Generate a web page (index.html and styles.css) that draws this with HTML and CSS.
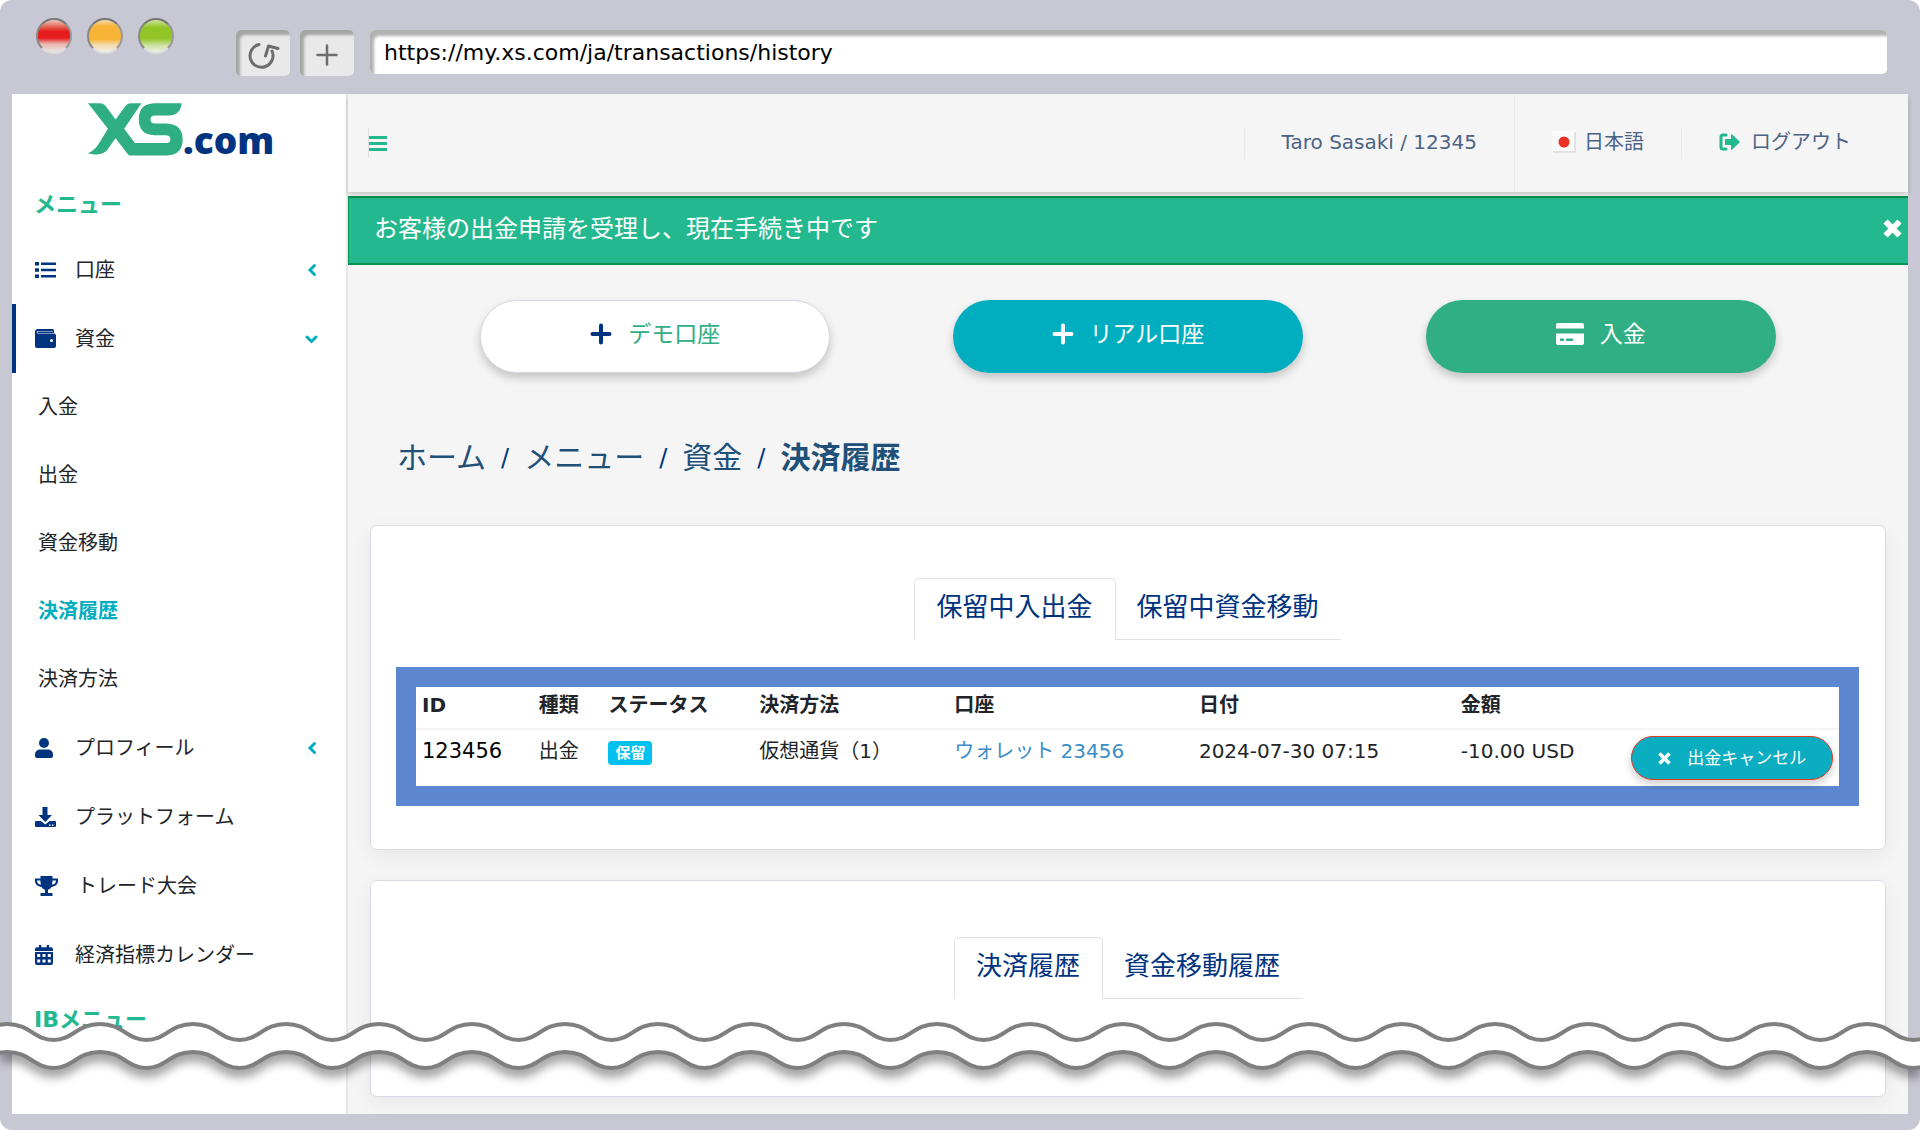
FILE: index.html
```html
<!DOCTYPE html>
<html lang="ja">
<head>
<meta charset="utf-8">
<title>決済履歴 | XS.com</title>
<link rel="stylesheet" href="styles.css">
</head>
<body>
<div class="window">
  <div class="chrome">
    <div class="lights">
      <span class="light light-red"></span>
      <span class="light light-yellow"></span>
      <span class="light light-green"></span>
    </div>
    <div class="chrome-buttons">
      <button class="chrome-button" type="button" aria-label="再読み込み">
        <svg width="34" height="30" viewBox="0 0 34 30" fill="none" stroke="#6e6e6e" stroke-width="3" stroke-linecap="round" stroke-linejoin="round"><path d="M13 4.500A11.500 11.500 0 1 0 26 11M19.500 16L22.500 6L32 8.500"/></svg>
      </button>
      <button class="chrome-button" type="button" aria-label="新しいタブ">
        <svg width="22" height="22" viewBox="0 0 22 22" fill="none" stroke="#6e6e6e" stroke-width="2.500" stroke-linecap="round"><path d="M11 1.500V20.500M1.500 11H20.500"/></svg>
      </button>
    </div>
    <input class="address" type="text" aria-label="アドレス" value="https://my.xs.com/ja/transactions/history">
  </div>

  <div class="page">
    <aside class="sidebar">
      <a class="logo" href="#" aria-label="XS.com">
        <svg width="95" height="53" viewBox="264 308 286 158" fill="#2fae84"><path d="M264 308H301Q312 308 320 320L347 357L377 316Q383 308 391 308H425L373 385L405 428H498Q512 428 512 416Q512 404 498 404H463Q417 402 417 356Q417 310 463 308H546Q543 343 508 345H466Q452 345 452 357Q452 369 466 369H500Q549 371 549 417Q549 463 502 465H387L347 413L324 446Q309 470 264 459Q286 448 297 429L324 385Z"/></svg>
        <span class="logo-com">.com</span>
      </a>
      <h2 class="menu-title">メニュー</h2>
      <nav class="menu">
        <a class="menu-item" href="#">
          <svg class="menu-icon" width="21" height="18" viewBox="0 0 21 18" fill="#003380"><path d="M0 1h4v3.500H0zM0 7.200h4v3.500H0zM0 13.500h4V17H0zM6 1.500h15V4H6zM6 7.800h15v2.500H6zM6 14h15v2.500H6z"/></svg>
          <span class="menu-label">口座</span>
          <svg class="chevron" width="14" height="14" viewBox="0 0 14 14"><path d="M9.500 2.500L5 7l4.500 4.500"/></svg>
        </a>
        <a class="menu-item menu-item-active" href="#">
          <svg class="menu-icon" width="21" height="19" viewBox="0 0 21 19"><path fill="#003380" d="M3 0h14.500A1.500 1.500 0 0 1 19 1.500V4H3.200a.7.700 0 0 1 0-1.400H18V2H3A1.200 1.200 0 0 0 3 4.500H19a2 2 0 0 1 2 2V17a2 2 0 0 1-2 2H2a2 2 0 0 1-2-2V3a3 3 0 0 1 3-3z"/><circle cx="16.500" cy="11.500" r="1.500" fill="#fff"/></svg>
          <span class="menu-label">資金</span>
          <svg class="chevron" width="14" height="14" viewBox="0 0 14 14"><path d="M2 5L6.500 9.500L11 5"/></svg>
        </a>
        <a class="menu-sub" href="#">入金</a>
        <a class="menu-sub" href="#">出金</a>
        <a class="menu-sub" href="#">資金移動</a>
        <a class="menu-sub menu-sub-current" href="#">決済履歴</a>
        <a class="menu-sub" href="#">決済方法</a>
        <a class="menu-item" href="#">
          <svg class="menu-icon" width="18" height="20" viewBox="0 0 18 20" fill="#003380"><circle cx="9" cy="5" r="5"/><path d="M5 11.500h8a5 5 0 0 1 5 5V18a2 2 0 0 1-2 2H2a2 2 0 0 1-2-2v-1.500a5 5 0 0 1 5-5z"/></svg>
          <span class="menu-label">プロフィール</span>
          <svg class="chevron" width="14" height="14" viewBox="0 0 14 14"><path d="M9.500 2.500L5 7l4.500 4.500"/></svg>
        </a>
        <a class="menu-item" href="#">
          <svg class="menu-icon" width="21" height="20" viewBox="0 0 21 20" fill="#003380"><path d="M7.500 0h5v8H17l-6.700 7L3.500 8h4z"/><path fill-rule="evenodd" d="M1 14h5l4.300 3.500L14.500 14H20a1 1 0 0 1 1 1v4a1 1 0 0 1-1 1H1a1 1 0 0 1-1-1v-4a1 1 0 0 1 1-1zm13 3.500V19h1.500v-1.500zm3 0V19h1.500v-1.500z"/></svg>
          <span class="menu-label">プラットフォーム</span>
        </a>
        <a class="menu-item" href="#">
          <svg class="menu-icon" width="23" height="20" viewBox="0 0 23 20" fill="#003380"><path fill-rule="evenodd" d="M5.500 0h12v2.500H23V5c0 3.500-3 5.500-6.500 6-.8 1.500-2 2.300-3.500 2.700V17h4.500v3h-12v-3H10v-3.300C8.500 13.300 7.300 12.500 6.500 11 3 10.500 0 8.500 0 5V2.500h5.500zM2 4.500V5c0 2 1.700 3.300 4 3.800-.4-1.300-.6-2.800-.6-4.300zm15.500 0c0 1.500-.2 3-.6 4.300C19.300 8.300 21 7 21 5v-.5z"/></svg>
          <span class="menu-label">トレード大会</span>
        </a>
        <a class="menu-item" href="#">
          <svg class="menu-icon" width="18" height="20" viewBox="0 0 18 20" fill="#003380"><path fill-rule="evenodd" d="M4 0h2.300v2.200h5.400V0H14v2.200h2A2 2 0 0 1 18 4v2H0V4a2 2 0 0 1 2-1.800h2zM0 7h18v11a2 2 0 0 1-2 2H2a2 2 0 0 1-2-2zm2.200 2v3h3V9zm5.300 0v3h3V9zm5.300 0v3h3V9zM2.200 14.500v3h3v-3zm5.300 0v3h3v-3zm5.300 0v3h3v-3z"/></svg>
          <span class="menu-label">経済指標カレンダー</span>
        </a>
      </nav>
      <h2 class="menu-title">IBメニュー</h2>
    </aside>

    <main class="main">
      <header class="topbar">
        <button class="toggle" type="button" aria-label="メニュー切替">
          <svg width="18" height="17" viewBox="0 0 18 17" fill="#22b890"><path d="M0 1h18v3H0zM0 7h18v3H0zM0 13h18v3H0z"/></svg>
        </button>
        <div class="topbar-links">
          <a class="topbar-link topbar-user" href="#">Taro Sasaki / 12345</a>
          <a class="topbar-link topbar-lang" href="#">
            <svg width="24" height="22" viewBox="0 0 24 22"><path fill="#e2e2e2" d="M1 1h23v21H1z"/><path fill="#fafafa" d="M0 0h22v20H0z"/><circle cx="12" cy="11" r="5.500" fill="#ee3124"/></svg>
            日本語
          </a>
          <a class="topbar-link topbar-logout" href="#">
            <svg width="21" height="18" viewBox="0 0 21 18"><path fill="none" stroke="#22b890" stroke-width="3" stroke-linecap="round" d="M7 2H4Q2 2 2 4v10q0 2 2 2h3"/><path fill="#22b890" d="M6 6h6V2.500q0-2 1.500-.7l6.800 6.400q.8.800 0 1.600l-6.800 6.400q-1.500 1.300-1.500-.7V12H6z"/></svg>
            ログアウト
          </a>
        </div>
      </header>

      <div class="alert" role="alert">
        <span>お客様の出金申請を受理し、現在手続き中です</span>
        <button class="alert-close" type="button" aria-label="閉じる">
          <svg width="19" height="19" viewBox="0 0 19 19" fill="none" stroke="#fff" stroke-width="6"><path d="M2.500 2.500L16.500 16.500M16.500 2.500L2.500 16.500"/></svg>
        </button>
      </div>

      <div class="actions">
        <button class="action action-demo" type="button">
          <svg width="22" height="22" viewBox="0 0 22 22" fill="none" stroke="#003380" stroke-width="4" stroke-linecap="round"><path d="M11 2.500v17M2.500 11h17"/></svg>
          デモ口座
        </button>
        <button class="action action-real" type="button">
          <svg width="22" height="22" viewBox="0 0 22 22" fill="none" stroke="#fff" stroke-width="4" stroke-linecap="round"><path d="M11 2.500v17M2.500 11h17"/></svg>
          リアル口座
        </button>
        <button class="action action-deposit" type="button">
          <svg width="28" height="22" viewBox="0 0 28 22" fill="#fff"><path fill-rule="evenodd" d="M2 0h24a2 2 0 0 1 2 2v3.500H0V2a2 2 0 0 1 2-2zM0 10.500h28V20a2 2 0 0 1-2 2H2a2 2 0 0 1-2-2zM4 15.500V18h4v-2.500zm6 0V18h7v-2.500z"/></svg>
          入金
        </button>
      </div>

      <nav class="breadcrumb" aria-label="パンくず">
        <a href="#">ホーム</a><span>/</span><a href="#">メニュー</a><span>/</span><a href="#">資金</a><span>/</span><a class="breadcrumb-current" href="#">決済履歴</a>
      </nav>

      <div class="cards">
        <section class="card">
          <div class="tabs" role="tablist">
            <button class="tab tab-active" type="button" role="tab">保留中入出金</button>
            <button class="tab" type="button" role="tab">保留中資金移動</button>
          </div>
          <div class="highlight">
            <table class="transactions">
              <colgroup><col class="col-id"><col class="col-type"><col class="col-status"><col class="col-method"><col class="col-account"><col class="col-date"><col class="col-amount"><col></colgroup>
              <thead>
                <tr><th>ID</th><th>種類</th><th>ステータス</th><th>決済方法</th><th>口座</th><th>日付</th><th>金額</th><th></th></tr>
              </thead>
              <tbody>
                <tr>
                  <td class="cell-id">123456</td>
                  <td>出金</td>
                  <td><span class="badge">保留</span></td>
                  <td>仮想通貨（1）</td>
                  <td><a class="account-link" href="#">ウォレット 23456</a></td>
                  <td>2024-07-30 07:15</td>
                  <td>-10.00 USD</td>
                  <td class="cell-action">
                    <button class="cancel" type="button">
                      <svg width="13" height="13" viewBox="0 0 13 13" fill="none" stroke="#fff" stroke-width="3.500"><path d="M1.500 1.500l10 10M11.500 1.500l-10 10"/></svg>
                      出金キャンセル
                    </button>
                  </td>
                </tr>
              </tbody>
            </table>
          </div>
        </section>

        <section class="card card-history">
          <div class="tabs" role="tablist">
            <button class="tab tab-active" type="button" role="tab">決済履歴</button>
            <button class="tab" type="button" role="tab">資金移動履歴</button>
          </div>
        </section>
      </div>
    </main>
  </div>

  <svg class="tear" width="100%" height="48" aria-hidden="true">
    <defs>
      <pattern id="wave" x="7" y="0" width="93" height="48" patternUnits="userSpaceOnUse">
        <path fill="#fff" d="M0 2C23 2 27 18 46.500 18S70 2 93 2V30C70 30 66 46 46.500 46S23 30 0 30Z"/>
        <path fill="none" stroke="#7f7f7f" stroke-width="4" d="M-2 2H0C23 2 27 18 46.500 18S70 2 93 2H95M-2 30H0C23 30 27 46 46.500 46S70 30 93 30H95"/>
      </pattern>
    </defs>
    <rect width="100%" height="48" fill="url(#wave)"/>
  </svg>
</div>
</body>
</html>
```
FILE: styles.css
```css
* {
  box-sizing: border-box;
}

body {
  margin: 0;
  background: #fff;
  font-family: "DejaVu Sans", "Noto Sans CJK JP", sans-serif;
  font-size: 20px;
  line-height: 30px;
  color: #212529;
}

a {
  color: inherit;
  text-decoration: none;
}

button {
  margin: 0;
  padding: 0;
  border: 0;
  background: none;
  font: inherit;
  color: inherit;
}

svg {
  flex: none;
}

/* Browser frame */
.window {
  position: relative;
  display: flex;
  flex-direction: column;
  min-height: 100vh;
  padding: 0 12px 16px;
  border-radius: 12px;
  background: #c8c7d4;
  overflow: hidden;
}

.chrome {
  display: flex;
  align-items: flex-start;
  height: 94px;
  padding: 18px 21px 0 24px;
}

.lights {
  display: flex;
  gap: 15px;
  width: 200px;
}

.light {
  width: 36px;
  height: 36px;
  border: 2px solid;
  border-color: #777 #999 #ddd #888;
  border-radius: 50%;
}

.light-red {
  background: linear-gradient(#f0c8c0, #e0604c 22%, #e61c1c 36%, #e61c1c 56%, #eab8ae 75%, #ece4e0);
}

.light-yellow {
  background: linear-gradient(#f6dcae, #f8b436 20%, #f8b436 60%, #f4dcae 78%, #f2ede2);
}

.light-green {
  background: linear-gradient(#cde49c, #92c626 24%, #92c626 58%, #cbe09c 78%, #eef0e6);
}

.chrome-buttons {
  display: flex;
  gap: 10px;
  padding: 12px 16px 0 0;
}

.chrome-button {
  display: flex;
  align-items: center;
  justify-content: center;
  width: 54px;
  height: 46px;
  padding-top: 4px;
  border-radius: 5px;
  background: #e9e9e9;
  box-shadow: inset 4px 5px 3px #a4a4a4;
}

.address {
  flex: 1;
  min-width: 0;
  height: 44px;
  margin-top: 12px;
  padding: 0 14px;
  border: 0;
  border-radius: 5px;
  background: #fff;
  box-shadow: inset 4px 6px 3px #b2b2b2;
  font: inherit;
  font-size: 22px;
  color: #000;
}

.page {
  display: flex;
  flex: 1;
  background: #f5f5f5;
}

/* Sidebar */
.sidebar {
  flex: none;
  width: 336px;
  border-right: 2px solid #e8e8e8;
  background: #fff;
}

.logo {
  display: flex;
  align-items: flex-end;
  height: 62px;
  margin-bottom: 32px;
  padding-left: 76px;
}

.logo-com {
  font-family: "Open Sans", sans-serif;
  font-size: 37px;
  font-weight: 800;
  line-height: 32px;
  color: #003380;
}

.menu-title {
  margin: 0;
  padding-left: 22px;
  font-size: 22px;
  font-weight: 700;
  line-height: 34px;
  color: #22b890;
}

.menu {
  padding: 13px 0 14px;
}

.menu-item {
  display: flex;
  align-items: center;
  height: 69px;
  padding: 0 27px 0 23px;
}

.menu-item-active {
  padding-left: 19px;
  border-left: 4px solid #003380;
}

.menu-icon {
  margin-right: 19px;
}

.menu-icon[width="18"] {
  margin-right: 22px;
}

.menu-label {
  flex: 1;
}

.chevron {
  fill: none;
  stroke: #00aec0;
  stroke-width: 3;
  stroke-linecap: round;
}

.menu-sub {
  display: block;
  padding-left: 26px;
  line-height: 68px;
}

.menu-sub-current {
  font-weight: 700;
  color: #00aec0;
}

/* Main column */
.main {
  flex: 1;
  min-width: 0;
}

.topbar {
  display: flex;
  align-items: center;
  justify-content: space-between;
  position: relative;
  height: 98px;
  margin-bottom: 4px;
  padding-left: 20px;
  box-shadow: 0 3px 5px rgba(0, 0, 0, 0.18);
  color: #4c6385;
}

.toggle {
  display: flex;
  align-items: center;
  height: 30px;
  border-left: 1px solid #e0e0e0;
}

.topbar-links {
  display: flex;
  align-items: center;
  align-self: stretch;
}

.topbar-link {
  display: flex;
  align-items: center;
  gap: 8px;
  padding: 0 37px 2px;
  border-left: 1px solid #eaeaea;
}

.topbar-lang {
  align-self: stretch;
}

.topbar-logout {
  gap: 11px;
  padding-right: 57px;
}

.alert {
  display: flex;
  align-items: center;
  justify-content: space-between;
  height: 69px;
  padding: 0 6px 4px 25px;
  border: 1px solid #0a9150;
  border-width: 2px 0 2px 1px;
  background: #24b88f;
  font-size: 24px;
  color: #fff;
}

.alert-close {
  display: flex;
}

.actions {
  display: grid;
  grid-template-columns: repeat(3, 1fr);
  justify-items: center;
  padding: 35px 71px 0;
}

.action {
  display: flex;
  align-items: center;
  justify-content: center;
  gap: 16px;
  width: 74%;
  height: 73px;
  padding-bottom: 6px;
  border-radius: 37px;
  box-shadow: 0 5px 10px rgba(0, 0, 0, 0.2);
  font-size: 23px;
  color: #fff;
}

.action-demo {
  border: 1px solid #d5d8e2;
  background: #fff;
  color: #2fae84;
}

.action-real {
  background: #00aec0;
}

.action-deposit {
  background: #30ae84;
}

.breadcrumb {
  display: flex;
  gap: 15px;
  padding: 64px 49px 46px;
  font-size: 30px;
  line-height: 42px;
  color: #204f78;
}

.breadcrumb span {
  font-size: 24px;
  color: #003380;
}

.breadcrumb-current {
  font-weight: 700;
}

/* Cards */
.cards {
  display: flex;
  flex-direction: column;
  gap: 30px;
  padding: 0 22px 17px;
}

.card {
  padding: 52px 26px 43px 25px;
  border: 1px solid #d8dbe3;
  border-radius: 7px;
  background: #fff;
  box-shadow: 0 6px 20px rgba(0, 0, 0, 0.06);
}

.card-history {
  padding: 56px 26px 97px;
}

.tabs {
  display: flex;
  justify-content: center;
}

.tab {
  height: 62px;
  padding: 0 22px 4px 21px;
  border-bottom: 1px solid #dee2e6;
  font-size: 26px;
  color: #003380;
}

.tab-active {
  border: 1px solid #dee2e6;
  border-bottom-color: transparent;
  border-radius: 5px 5px 0 0;
}

.highlight {
  margin-top: 27px;
  border: 20px solid #5c86d0;
}

.transactions {
  width: 100%;
  table-layout: fixed;
  border-collapse: collapse;
}

.col-id { width: 8.2%; }
.col-type { width: 4.9%; }
.col-status { width: 10.6%; }
.col-method { width: 13.7%; }
.col-account { width: 17.2%; }
.col-date { width: 18.4%; }
.col-amount { width: 12%; }

.transactions th {
  height: 42px;
  padding: 0 6px 6px;
  border-bottom: 2px solid #f4f4f4;
  text-align: left;
}

.transactions td {
  height: 57px;
  padding: 6px 6px 0;
  vertical-align: top;
  white-space: nowrap;
}

.transactions .cell-id {
  font-size: 21px;
  color: #000;
}

.account-link {
  color: #3c8dc5;
}

.badge {
  display: inline-block;
  padding: 0 7px;
  border-radius: 4px;
  background: #00c0ef;
  font-size: 15px;
  font-weight: 700;
  line-height: 24px;
  color: #fff;
}

.cancel {
  display: flex;
  align-items: center;
  justify-content: center;
  gap: 16px;
  width: 100%;
  height: 44px;
  border: 1px solid #e03a20;
  border-radius: 22px;
  background: #0badc0;
  box-shadow: 0 4px 8px rgba(0, 0, 0, 0.2);
  font-size: 17px;
  color: #fff;
}

/* Torn strip across the lower part of the window */
.tear {
  position: absolute;
  left: 0;
  bottom: 60px;
  filter: drop-shadow(0 8px 5px rgba(0, 0, 0, 0.35));
}
```
